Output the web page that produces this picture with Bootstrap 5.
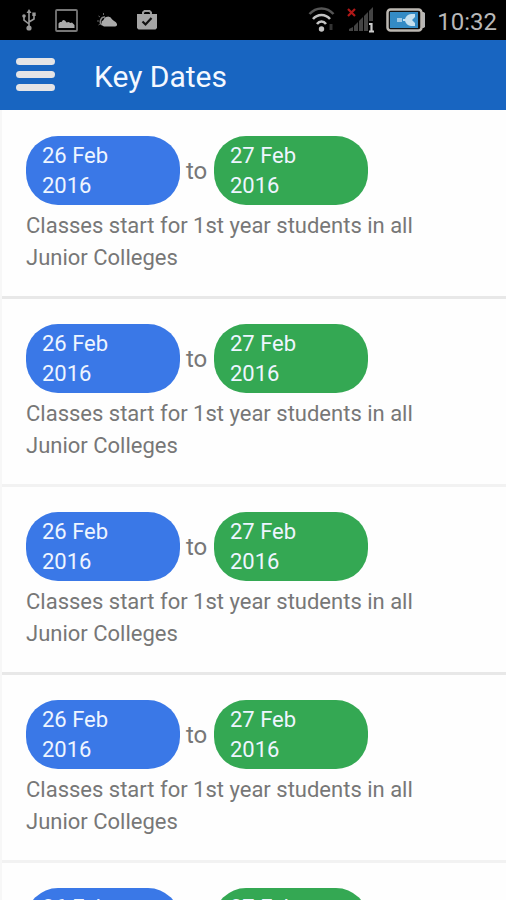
<!DOCTYPE html>
<html lang="en">
<head>
<meta charset="utf-8">
<meta name="viewport" content="width=device-width, initial-scale=1">
<title>Key Dates</title>
<link href="https://cdn.jsdelivr.net/npm/bootstrap@5.3.0/dist/css/bootstrap.min.css" rel="stylesheet">
<style>
  body { font-family: Roboto, "Noto Sans", sans-serif; color: #777; background: #fefefe; }
  svg { display: block; flex: none; }
  .status-bar { height: 40px; background: #000; color: #aaa; padding: 0 9px 0 21px; }
  .status-left { gap: 18px; }
  .status-right { gap: 11px; }
  .clock { font-size: 24px; line-height: 30px; padding-top: 4px; color: #b8b8b8; }
  .app-bar { height: 70px; background: #1865c1; padding: 0 16px; gap: 39px; }
  .app-title { font-size: 30px; line-height: 40px; padding-top: 4px; color: #f4f8ff; }
  .menu-btn { line-height: 0; }
  .date-list { border-left: 2px solid #f7f7f7; padding-top: 1px; }
  .date-item { padding: 25px 24px 22px; border-bottom: 3px solid #e8e8e8; }
  .date-item:nth-child(even) { border-bottom-color: #f2f2f2; }
  .date-row { gap: 6px; }
  .pill { width: 154px; padding: 5px 16px 4px; border-radius: 32px; font-size: 22px; line-height: 30px; color: #eef5ff; }
  .pill-start { background: #3a78e7; }
  .pill-end { background: #34a853; }
  .joiner { width: 22px; font-size: 24px; line-height: 30px; }
  .date-text { font-size: 22px; line-height: 32px; max-width: 420px; padding-top: 5px; }
</style>
</head>
<body>
<div class="d-flex flex-column vh-100 overflow-hidden">
  <div class="status-bar d-flex align-items-center justify-content-between flex-shrink-0">
    <div class="status-left d-flex align-items-center">
      <svg width="16" height="22" viewBox="0 0 16 22" fill="none" stroke="#999" stroke-width="1.6" aria-label="USB"><path d="M8 3v15M8 15L3 11V8M8 13l5-3V6"/><path d="M8 0l2.500 4h-5z" fill="#999" stroke="none"/><circle cx="8" cy="19" r="2.600" fill="#999" stroke="none"/><circle cx="3" cy="7" r="1.800" fill="#999" stroke="none"/><path d="M11.300 3.500h3.400v3.400h-3.400z" fill="#999" stroke="none"/></svg>
      <svg width="23" height="23" viewBox="0 0 23 23" aria-label="Picture"><rect x="1" y="1" width="21" height="21" rx="1" fill="none" stroke="#777" stroke-width="1.800"/><path d="M3.500 19v-4.500l1.500-1.500h1.500l1.500-2 2 .5 1.500 2 2-.5 2 1 1.500-.5 2.500 2.500v3z" fill="#aaa"/></svg>
      <svg width="22" height="18" viewBox="0 0 22 18" aria-label="Weather"><path d="M6 14a4.500 4.500 0 0 1 3-8" fill="none" stroke="#888" stroke-width="1.500"/><path d="M1 10h2M2.500 5l1.500 1M7.500 2v2M2.500 14l1.500-1" stroke="#666"/><path d="M8 15.500a3.400 3.400 0 0 1-.5-6.400A4.500 4.500 0 0 1 16 8.300c1 1.700 4 2 5 4.700.3 1.500-.5 2.500-2 2.500z" fill="#aaa"/></svg>
      <svg width="22" height="22" viewBox="0 0 22 22" aria-label="Apps updated"><path d="M7 6V3.500L8.500 2h5L15 3.500V6" fill="none" stroke="#999" stroke-width="2"/><path d="M1 5h20v14l-1.500 1.500h-17L1 19z" fill="#a5a5a5"/><path d="M6.500 12.500l3 3 6-6.500" fill="none" stroke="#111" stroke-width="2.200"/></svg>
    </div>
    <div class="status-right d-flex align-items-center">
      <svg width="28" height="26" viewBox="0 0 28 26" fill="none" aria-label="Wi-Fi"><path d="M1.500 7C8-.5 19-.5 25.500 7" stroke="#555" stroke-width="2.500"/><path d="M5 12c4.500-5.500 12.500-5.500 17 0M9 17c2.500-3.500 6.500-3.500 9 0" stroke="#c4c4c4" stroke-width="2.500"/><circle cx="13.500" cy="22" r="2.700" fill="#c4c4c4"/><path d="M23 17v6" stroke="#333" stroke-width="3"/></svg>
      <svg width="28" height="26" viewBox="0 0 28 26" aria-label="Signal, SIM 1"><path d="M2 24v-2l4-2v4zM7 24v-5l4-4v9zM12 24V14l4-4v14zM17 24V9l4-4v19zM22 14V4l4-4v14z" fill="#444"/><path d="M1 2l7 7M8 2L1 9" stroke="#b01818" stroke-width="2.200"/><path d="M22 17h2.500v7M22 24.500h5" fill="none" stroke="#ccc" stroke-width="2.200"/></svg>
      <svg width="40" height="24" viewBox="0 0 40 24" aria-label="Battery charging"><path d="M35 4h2.500L39 5v14l-1.500 1H35z" fill="#b5b5b5"/><rect x="1.500" y="1.500" width="34" height="21" rx="3" fill="#111" stroke="#bcb8b2" stroke-width="2.500"/><path d="M4 4h28v16H4z" fill="#348bc5"/><path d="M11 10h5v4h-5z" fill="#9fc9e5"/><path d="M17 11h2c1-3 3-4.500 6-5h4v3l-3 3 3 3v3h-4c-3-.5-5-2-6-5h-2z" fill="#c5e0ef"/></svg>
      <div class="clock">10:32</div>
    </div>
  </div>
  <header class="app-bar d-flex align-items-center flex-shrink-0">
    <button type="button" class="menu-btn btn p-0 border-0" aria-label="Menu">
      <svg width="39" height="34" viewBox="0 0 39 34" fill="#e4e4e6"><rect width="39" height="7" rx="3.500"/><rect y="13" width="39" height="7" rx="3.500"/><rect y="26" width="39" height="7" rx="3.500"/></svg>
    </button>
    <h1 class="app-title fw-normal mb-0">Key Dates</h1>
  </header>
  <main class="flex-grow-1 overflow-hidden">
    <ul class="date-list list-unstyled mb-0">
      <li class="date-item">
        <div class="date-row d-flex align-items-center"><time class="pill pill-start" datetime="2016-02-26"><span class="d-block">26 Feb</span><span class="d-block">2016</span></time><span class="joiner">to</span><time class="pill pill-end" datetime="2016-02-27"><span class="d-block">27 Feb</span><span class="d-block">2016</span></time></div>
        <p class="date-text mb-0">Classes start for 1st year students in all Junior Colleges</p>
      </li>
      <li class="date-item">
        <div class="date-row d-flex align-items-center"><time class="pill pill-start" datetime="2016-02-26"><span class="d-block">26 Feb</span><span class="d-block">2016</span></time><span class="joiner">to</span><time class="pill pill-end" datetime="2016-02-27"><span class="d-block">27 Feb</span><span class="d-block">2016</span></time></div>
        <p class="date-text mb-0">Classes start for 1st year students in all Junior Colleges</p>
      </li>
      <li class="date-item">
        <div class="date-row d-flex align-items-center"><time class="pill pill-start" datetime="2016-02-26"><span class="d-block">26 Feb</span><span class="d-block">2016</span></time><span class="joiner">to</span><time class="pill pill-end" datetime="2016-02-27"><span class="d-block">27 Feb</span><span class="d-block">2016</span></time></div>
        <p class="date-text mb-0">Classes start for 1st year students in all Junior Colleges</p>
      </li>
      <li class="date-item">
        <div class="date-row d-flex align-items-center"><time class="pill pill-start" datetime="2016-02-26"><span class="d-block">26 Feb</span><span class="d-block">2016</span></time><span class="joiner">to</span><time class="pill pill-end" datetime="2016-02-27"><span class="d-block">27 Feb</span><span class="d-block">2016</span></time></div>
        <p class="date-text mb-0">Classes start for 1st year students in all Junior Colleges</p>
      </li>
      <li class="date-item">
        <div class="date-row d-flex align-items-center"><time class="pill pill-start" datetime="2016-02-26"><span class="d-block">26 Feb</span><span class="d-block">2016</span></time><span class="joiner">to</span><time class="pill pill-end" datetime="2016-02-27"><span class="d-block">27 Feb</span><span class="d-block">2016</span></time></div>
        <p class="date-text mb-0">Classes start for 1st year students in all Junior Colleges</p>
      </li>
    </ul>
  </main>
</div>
<script src="https://cdn.jsdelivr.net/npm/bootstrap@5.3.0/dist/js/bootstrap.bundle.min.js"></script>
</body>
</html>
